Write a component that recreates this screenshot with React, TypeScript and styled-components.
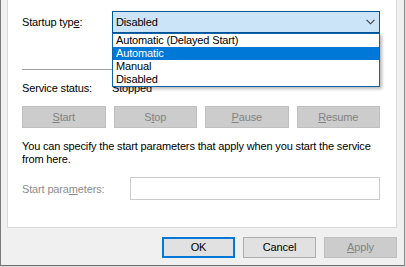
import React from "react";
import styled, { createGlobalStyle } from "styled-components";

const Global = createGlobalStyle`
  html, body { margin: 0; padding: 0; background: #dcdcdc; }
  body {
    font-family: "Liberation Sans", Arial, sans-serif;
    font-size: 11px;
    letter-spacing: -0.15px;
    color: #000;
  }
  * { box-sizing: border-box; }
`;

const Window = styled.div`
  width: 405px;
  height: 266px;
  background: #f0f0f0;
  border-left: 1px solid #7a7a7a;
  border-right: 1px solid #8c8c8c;
  border-bottom: 1px solid #6e6e6e;
  padding: 0 7px 0 6px;
  display: flex;
  flex-direction: column;
`;

const Panel = styled.div`
  background: #fff;
  border: 1px solid #d9d9d9;
  border-top: none;
  padding: 11px 16px 27px 14px;
  display: flex;
  flex-direction: column;
`;

const FieldRow = styled.div<{ $h: number; $mt?: number }>`
  display: flex;
  align-items: center;
  height: ${(p) => p.$h}px;
  margin-top: ${(p) => p.$mt ?? 0}px;
`;

const Label = styled.div<{ $w: number; $disabled?: boolean }>`
  width: ${(p) => p.$w}px;
  flex: none;
  color: ${(p) => (p.$disabled ? "#8d8d8d" : "#000")};
  line-height: 14px;
`;

const Value = styled.div`
  line-height: 14px;
`;

const Combo = styled.div`
  position: relative;
  flex: 1;
  height: 22px;
  background: #cce4f7;
  border: 1px solid #005499;
  padding-left: 3px;
  display: flex;
  align-items: center;
  justify-content: space-between;
  padding-right: 4px;
`;

const Chevron = styled.svg`
  width: 9px;
  height: 6px;
  display: block;
`;

const DropList = styled.div`
  position: absolute;
  z-index: 2;
  left: -1px;
  right: -1px;
  top: 21px;
  background: #fff;
  border: 1px solid #1463a8;
  box-shadow: 2px 2px 3px rgba(0, 0, 0, 0.28);
  display: flex;
  flex-direction: column;
`;

const DropItem = styled.div<{ $selected?: boolean }>`
  height: 13px;
  line-height: 13px;
  padding-left: 3px;
  background: ${(p) => (p.$selected ? "#0078d7" : "#fff")};
  color: ${(p) => (p.$selected ? "#fff" : "#000")};
  white-space: nowrap;
`;

const Separator = styled.div`
  margin-top: 36px;
  height: 1px;
  background: #a0a0a0;
`;

const ServiceButtons = styled.div`
  margin-top: 11px;
  display: grid;
  grid-template-columns: repeat(4, 1fr);
  gap: 8px;
  height: 22px;
`;

const DlgButton = styled.div<{ $variant?: "default" | "normal" | "disabled" }>`
  display: flex;
  align-items: center;
  justify-content: center;
  height: 100%;
  background: ${(p) => (p.$variant === "disabled" ? "#cccccc" : "#e1e1e1")};
  border: ${(p) =>
    p.$variant === "default"
      ? "2px solid #0078d7"
      : p.$variant === "disabled"
      ? "1px solid #bfbfbf"
      : "1px solid #adadad"};
  color: ${(p) => (p.$variant === "disabled" ? "#838383" : "#000")};
  line-height: 13px;
`;

const Paragraph = styled.p`
  margin: 12px 0 0;
  line-height: 13px;
`;

const TextBox = styled.div`
  flex: 1;
  height: 23px;
  background: #fff;
  border: 1px solid #cccccc;
`;

const ButtonBar = styled.div`
  display: flex;
  justify-content: flex-end;
  gap: 8px;
  padding: 9px 0 7px;
`;

const BarButton = styled(DlgButton)`
  width: 73px;
  height: 21px;
`;

export default function App() {
  return (
    <>
      <Global />
      <Window>
        <Panel>
          <FieldRow $h={22}>
            <Label $w={90}>
              Startup typ<u>e</u>:
            </Label>
            <Combo>
              <span>Disabled</span>
              <Chevron viewBox="0 0 9 6">
                <path d="M0.5 0.8 L4.5 4.8 L8.5 0.8" fill="none" stroke="#3c3c3c" strokeWidth="1.1" />
              </Chevron>
              <DropList>
                <DropItem>Automatic (Delayed Start)</DropItem>
                <DropItem $selected>Automatic</DropItem>
                <DropItem>Manual</DropItem>
                <DropItem>Disabled</DropItem>
              </DropList>
            </Combo>
          </FieldRow>
          <Separator />
          <FieldRow $h={14} $mt={11}>
            <Label $w={90}>Service status:</Label>
            <Value>Stopped</Value>
          </FieldRow>
          <ServiceButtons>
            <DlgButton $variant="disabled">
              <span>
                <u>S</u>tart
              </span>
            </DlgButton>
            <DlgButton $variant="disabled">
              <span>
                S<u>t</u>op
              </span>
            </DlgButton>
            <DlgButton $variant="disabled">
              <span>
                <u>P</u>ause
              </span>
            </DlgButton>
            <DlgButton $variant="disabled">
              <span>
                <u>R</u>esume
              </span>
            </DlgButton>
          </ServiceButtons>
          <Paragraph>
            You can specify the start parameters that apply when you start the service
            <br />
            from here.
          </Paragraph>
          <FieldRow $h={23} $mt={11}>
            <Label $w={108} $disabled>
              Start para<u>m</u>eters:
            </Label>
            <TextBox />
          </FieldRow>
        </Panel>
        <ButtonBar>
          <BarButton $variant="default">OK</BarButton>
          <BarButton $variant="normal">Cancel</BarButton>
          <BarButton $variant="disabled">
            <span>
              <u>A</u>pply
            </span>
          </BarButton>
        </ButtonBar>
      </Window>
    </>
  );
}
